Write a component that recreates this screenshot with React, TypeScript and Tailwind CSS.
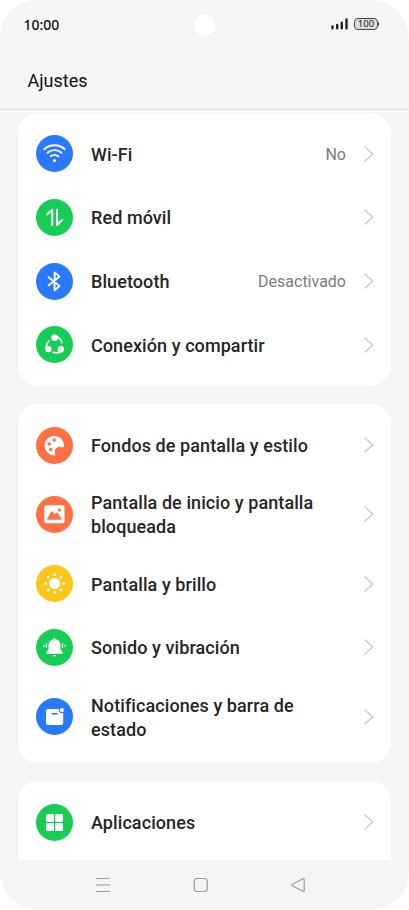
import type { ReactNode } from "react";

type Item = {
  label: string;
  value?: string;
  color: string;
  icon: ReactNode;
  tall?: boolean;
};

const BLUE = "bg-[#2979ff]";
const GREEN = "bg-[#17cd56]";
const ORANGE = "bg-[#ff7043]";
const YELLOW = "bg-[#ffc61a]";

const WifiIcon = (
  <g fill="none" stroke="#fff" strokeWidth="1.9" strokeLinecap="round">
    <path d="M8.2 14.2a15.6 15.6 0 0 1 20.6 0" />
    <path d="M11.5 17.8a10.6 10.6 0 0 1 14 0" />
    <path d="M14.7 21.3a5.8 5.8 0 0 1 7.6 0" />
    <circle cx="18.5" cy="25.5" r="1.5" fill="#fff" stroke="none" />
  </g>
);

const DataIcon = (
  <g fill="none" stroke="#fff" strokeWidth="2" strokeLinecap="round" strokeLinejoin="round">
    <path d="M16.2 26V10.8l-5.2 4.7" />
    <path d="M21 10.8v15.2l5.2-4.9" />
  </g>
);

const BluetoothIcon = (
  <path
    d="M12.6 14.2l10.900 8.800-4.900 4.200V9.400l4.900 4.200-10.900 8.800"
    fill="none"
    stroke="#fff"
    strokeWidth="1.9"
    strokeLinecap="round"
    strokeLinejoin="round"
  />
);

const ShareIcon = (
  <g fill="#fff">
    <circle cx="18.6" cy="11.8" r="3.3" />
    <circle cx="12.4" cy="23.1" r="3.2" />
    <circle cx="24.8" cy="23.1" r="3.2" />
    <g fill="none" stroke="#fff" strokeWidth="1.6" strokeLinecap="round">
      <path d="M13 14.800c-1.600 1.600-2.600 4-2.900 7.200" />
      <path d="M20.800 10.500c2.800 1.400 4.400 3.400 5.100 6" />
      <path d="M26.500 25.200c-3 1.600-6 1.900-9.300 1" />
    </g>
  </g>
);

const PaletteIcon = (
  <g>
    <path
      d="M28.1 19.2A9.8 9.8 0 1 0 18.6 28.3C19.5 28.3 19.1 27.2 18.9 25.8C18.4 22.2 20.6 19.8 23.9 19.9C25.8 20 27.9 21 28.1 19.2Z"
      fill="#fff"
    />
    <g fill="#ff7043">
      <circle cx="18.2" cy="13" r="1.7" />
      <circle cx="13.2" cy="17" r="1.7" />
      <circle cx="14.8" cy="22.5" r="1.7" />
    </g>
  </g>
);

const PictureIcon = (
  <g>
    <rect x="8.3" y="9.3" width="20.2" height="18" rx="2" fill="#fff" />
    <path
      d="M11.9 23.8c-.7 0-1-.5-.7-1l3.7-7c.4-.7 1.1-.7 1.6-.1l2 2.7 1.5-1.5c.5-.5 1.1-.5 1.5.2l4 5.7c.3.5 0 1-.6 1z"
      fill="#ff7043"
    />
    <circle cx="23.4" cy="13.9" r="1.6" fill="#ff7043" />
  </g>
);

const SunIcon = (
  <g fill="#fff">
    <circle cx="18.5" cy="18.5" r="5.5" />
    {[0, 45, 90, 135, 180, 225, 270, 315].map((angle) => (
      <rect
        key={angle}
        x="17.3"
        y="8.2"
        width="2.4"
        height="2.7"
        rx="1"
        transform={`rotate(${angle} 18.5 18.5)`}
      />
    ))}
  </g>
);

const BellIcon = (
  <g fill="#fff">
    <path d="M17.2 10.3c0-1.4 2.6-1.4 2.6 0 3 .6 4.700 2.900 4.700 5.700v4.200l2 2.700c.6.9.2 1.800-.8 1.800H11.300c-1 0-1.400-.9-.8-1.800l2-2.700V16c0-2.800 1.700-5.100 4.700-5.700z" />
    <path d="M16.8 25.9h3.4c-.2 1-.9 1.6-1.7 1.6s-1.5-.6-1.7-1.6z" />
    <g stroke="#fff" strokeWidth="1.3" strokeLinecap="round">
      <path d="M10.5 15v3.4M26.500 15v3.400M7.900 16.300v.9M29.100 16.300v.9" />
    </g>
  </g>
);

const NoticeIcon = (
  <g>
    <rect x="10" y="11" width="17.2" height="16" rx="2" fill="#fff" />
    <circle cx="25.9" cy="12.2" r="3" fill="#2979ff" />
    <circle cx="25.9" cy="12.1" r="2.1" fill="#fff" />
    <path d="M16.2 15.7h4.9" stroke="#2979ff" strokeWidth="1.5" strokeLinecap="round" />
  </g>
);

const AppsIcon = (
  <g fill="#fff">
    <rect x="10" y="10" width="7.9" height="7.9" rx="1.3" />
    <rect x="19.1" y="10" width="7.9" height="7.9" rx="1.3" />
    <rect x="10" y="19.1" width="7.9" height="7.9" rx="1.3" />
    <rect x="19.1" y="19.1" width="7.9" height="7.9" rx="1.3" />
  </g>
);

const GROUPS: Item[][] = [
  [
    { label: "Wi-Fi", value: "No", color: BLUE, icon: WifiIcon },
    { label: "Red móvil", color: GREEN, icon: DataIcon },
    { label: "Bluetooth", value: "Desactivado", color: BLUE, icon: BluetoothIcon },
    { label: "Conexión y compartir", color: GREEN, icon: ShareIcon },
  ],
  [
    { label: "Fondos de pantalla y estilo", color: ORANGE, icon: PaletteIcon },
    { label: "Pantalla de inicio y pantalla bloqueada", color: ORANGE, icon: PictureIcon, tall: true },
    { label: "Pantalla y brillo", color: YELLOW, icon: SunIcon },
    { label: "Sonido y vibración", color: GREEN, icon: BellIcon },
    { label: "Notificaciones y barra de estado", color: BLUE, icon: NoticeIcon, tall: true },
  ],
  [{ label: "Aplicaciones", color: GREEN, icon: AppsIcon }],
];

function SettingsRow({ item }: { item: Item }) {
  return (
    <li className={`flex items-center ${item.tall ? "h-[74.6px]" : "h-[63.8px]"}`}>
      <span className={`h-[37px] w-[37px] flex-none rounded-full ${item.color}`}>
        <svg viewBox="0 0 37 37" className="h-full w-full" aria-hidden="true">
          {item.icon}
        </svg>
      </span>
      <span className="ml-[18px] w-[230px] flex-none pt-0.5 text-[18px] leading-6 font-medium tracking-[0.08px] text-[#262626]">
        {item.label}
      </span>
      <span className="-ml-[70px] flex-1 pt-0.5 text-right text-base text-[#7c7c7c]">{item.value}</span>
      <svg viewBox="0 0 10 16" className="-mr-px ml-[18px] h-4 w-2.5 flex-none" aria-hidden="true">
        <path d="M1 1l7.7 7L1 15" fill="none" stroke="#c8c8c8" strokeWidth="1.3" strokeLinecap="round" strokeLinejoin="round" />
      </svg>
    </li>
  );
}

function StatusBar() {
  return (
    <div className="relative flex h-12 items-center justify-between pr-[30px] pl-[23.5px]">
      <span className="font-['Noto_Sans',sans-serif] text-[14px] font-medium text-[#111]">10:00</span>
      <span className="absolute top-[14px] left-[194px] h-[22px] w-[21px] rounded-full bg-white" />
      <div className="flex items-center gap-[5px]">
        <svg viewBox="0 0 18 12" className="h-3 w-[18px]" aria-hidden="true">
          <path
            d="M1.5 10.300V8.500M6.200 10.300V7M10.800 10.300V4.800M15.500 10.300V1.500"
            stroke="#222"
            strokeWidth="2.4"
            strokeLinecap="round"
          />
        </svg>
        <div className="flex items-center">
          <span className="flex h-3 w-6 items-center justify-center rounded-[4px] border border-[#444] bg-[#ddd] font-['Noto_Sans',sans-serif] text-[9.5px] leading-none text-[#222]">
            100
          </span>
          <span className="h-1 w-px rounded-r bg-[#444]" />
        </div>
      </div>
    </div>
  );
}

function NavBar() {
  return (
    <nav className="flex h-[50px] flex-none items-center justify-between pr-[103px] pl-[95px]">
      <svg viewBox="0 0 16 16" className="h-4 w-4" aria-hidden="true">
        <path d="M1 1.5h14M1 8h14M1 14.5h14" stroke="#999" strokeWidth="1.2" />
      </svg>
      <svg viewBox="0 0 16 16" className="h-4 w-4" aria-hidden="true">
        <rect x="1.2" y="1.5" width="13" height="13" rx="3" fill="none" stroke="#999" strokeWidth="1.2" />
      </svg>
      <svg viewBox="0 0 16 16" className="h-4 w-4" aria-hidden="true">
        <path
          d="M2.3 7.3L13 1.8q1.2-.5 1.2.7v11q0 1.2-1.2.7L2.3 8.7q-1.2-.7 0-1.4z"
          fill="none"
          stroke="#999"
          strokeWidth="1.1"
        />
      </svg>
    </nav>
  );
}

export default function App() {
  return (
    <div className="h-[910px] w-[409px] bg-white font-['Roboto',sans-serif]">
      <div className="flex h-full flex-col overflow-hidden rounded-[38px] bg-[#f5f5f5]">
        <header className="h-[110px] flex-none border-b border-[#dedede]">
          <StatusBar />
          <h1 className="mt-[21px] ml-[27.5px] text-[18px] leading-6 text-[#111]">Ajustes</h1>
        </header>
        <main className="flex min-h-0 flex-1 flex-col gap-[18.5px] overflow-hidden px-[18px] pt-[2.7px]">
          {GROUPS.map((group) => (
            <ul
              key={group[0].label}
              className="flex-none rounded-[20px] bg-white px-[18px] py-[9px] last:rounded-b-none last:pb-8"
            >
              {group.map((item) => (
                <SettingsRow key={item.label} item={item} />
              ))}
            </ul>
          ))}
        </main>
        <NavBar />
      </div>
    </div>
  );
}
